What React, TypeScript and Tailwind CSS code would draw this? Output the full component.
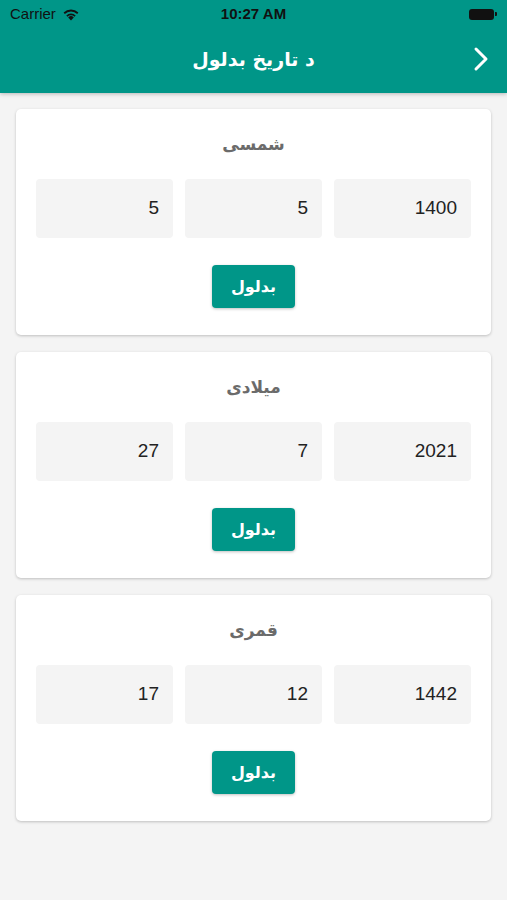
import React from "react";

const cards = [
  { title: "شمسی", values: ["1400", "5", "5"] },
  { title: "میلادی", values: ["2021", "7", "27"] },
  { title: "قمری", values: ["1442", "12", "17"] },
];

function Wifi() {
  return (
    <svg width="18" height="13" viewBox="0 0 18 13" className="ml-[6px]">
      <path d="M9 12.5 L6.2 9.4 A4 4 0 0 1 11.8 9.4 Z" fill="#111" />
      <path d="M4.3 7.4 A6.8 6.8 0 0 1 13.7 7.4 L12.5 8.7 A5.1 5.1 0 0 0 5.5 8.7 Z" fill="#111" />
      <path d="M1.6 4.6 A10.6 10.6 0 0 1 16.4 4.6 L15.2 5.9 A8.9 8.9 0 0 0 2.8 5.9 Z" fill="#111" />
    </svg>
  );
}

export default function App() {
  return (
    <div className="min-h-[900px] w-full bg-[#f4f4f4]" style={{ fontFamily: '"DejaVu Sans", "Noto Sans", sans-serif' }}>
      <div className="bg-[#009688] shadow-[0_1px_4px_rgba(0,0,0,0.25)] relative z-10">
        <div className="h-[28px] flex items-center justify-between px-[10px] text-[15px] text-[#111]" style={{ fontFamily: '"Liberation Sans", Arial, sans-serif' }}>
          <div className="flex items-center w-[120px]">
            <span>Carrier</span>
            <Wifi />
          </div>
          <span className="font-bold">10:27 AM</span>
          <div className="w-[120px] flex justify-end items-center">
            <div className="w-[25px] h-[11px] bg-[#111] rounded-[3px]" />
            <div className="w-[2px] h-[4px] bg-[#111] rounded-r-[1px] ml-[1px]" />
          </div>
        </div>
        <div className="h-[65px] relative flex items-center justify-center">
          <span dir="rtl" className="text-white text-[19px] font-bold -mt-[3px]">د تاریخ بدلول</span>
          <svg className="absolute right-[18px] top-[18px]" width="16" height="26" viewBox="0 0 16 26">
            <path d="M3 3 L13 13 L3 23" fill="none" stroke="white" strokeWidth="3" strokeLinecap="round" strokeLinejoin="round" />
          </svg>
        </div>
      </div>
      <div className="px-[16px] pt-[16px] flex flex-col gap-[17px]">
        {cards.map((c) => (
          <div key={c.title} className="bg-white rounded-[5px] shadow-[0_1px_3px_rgba(0,0,0,0.22)] pt-[23px] pb-[27px] px-[20px] flex flex-col items-center">
            <div dir="rtl" className="h-[24px] leading-[24px] text-[17px] font-bold text-[#6b6b6b]">{c.title}</div>
            <div dir="rtl" className="mt-[23px] w-full grid grid-cols-3 gap-[12px]">
              {c.values.map((v, i) => (
                <div key={i} className="h-[59px] bg-[#f4f4f4] rounded-[4px] flex items-center justify-start pr-[14px] text-[19px] text-[#222]" style={{ fontFamily: '"Liberation Sans", Arial, sans-serif' }}>
                  {v}
                </div>
              ))}
            </div>
            <button dir="rtl" className="mt-[27px] w-[83px] h-[43px] bg-[#009688] rounded-[4px] shadow-[0_1px_3px_rgba(0,0,0,0.25)] text-white text-[16px] font-bold flex items-center justify-center">
              بدلول
            </button>
          </div>
        ))}
      </div>
    </div>
  );
}
